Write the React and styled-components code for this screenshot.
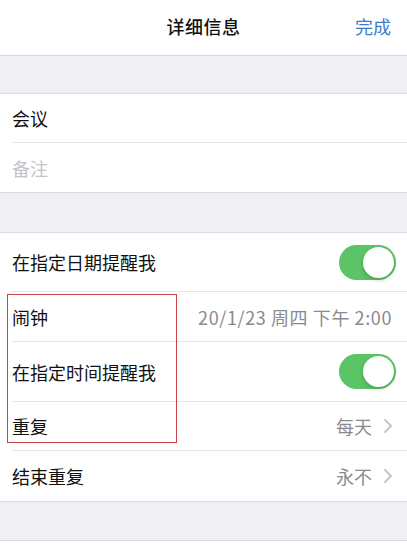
import React from 'react';
import styled, { createGlobalStyle } from 'styled-components';

const GlobalStyle = createGlobalStyle`
  html, body {
    margin: 0;
    padding: 0;
    background: #efeff4;
    font-family: "Noto Sans CJK SC", "Noto Sans", sans-serif;
  }
`;

const Page = styled.div`
  width: 407px;
  height: 554px;
  overflow: hidden;
  background: #efeff4;
  position: relative;
`;

const NavBar = styled.div`
  height: 56px;
  box-sizing: border-box;
  background: #fff;
  border-bottom: 1px solid #d8d8dc;
  display: flex;
  align-items: center;
  justify-content: center;
  position: relative;
`;

const Title = styled.div`
  font-size: 18px;
  font-weight: 500;
  color: #111;
  margin-top: -4px;
  letter-spacing: 0.5px;
`;

const Done = styled.div`
  position: absolute;
  right: 16px;
  top: 13px;
  font-size: 18px;
  color: #3d7cc9;
`;

const Gap = styled.div`
  height: ${p => p.h}px;
`;

const Section = styled.div`
  background: #fff;
  border-top: 1px solid #dcdce0;
  border-bottom: ${p => (p.open ? 'none' : '1px solid #dcdce0')};
  min-height: ${p => p.minH || 0}px;
`;

const Row = styled.div`
  height: ${p => p.h || 49}px;
  display: flex;
  align-items: center;
  margin-left: 12px;
  padding-right: 15px;
  box-sizing: border-box;
  border-bottom: ${p => (p.last ? 'none' : '1px solid #e6e6ea')};
`;

const Label = styled.div`
  flex: 1;
  font-size: 18px;
  color: ${p => (p.placeholder ? '#c4c4c8' : '#111')};
`;

const Value = styled.div`
  font-size: 18px;
  color: #8a8a8e;
  display: flex;
  align-items: center;
  gap: 12px;
`;

const Digits = styled.span`
  letter-spacing: 0.6px;
`;

const Chevron = () => (
  <svg width="8" height="14" viewBox="0 0 8 14">
    <path d="M1 1l6 6-6 6" fill="none" stroke="#c4c4c8" strokeWidth="1.8" strokeLinecap="round" strokeLinejoin="round" />
  </svg>
);

const Track = styled.div`
  width: 57px;
  height: 35px;
  border-radius: 18px;
  background: #5bc466;
  position: relative;
  margin-right: -4px;
`;

const Knob = styled.div`
  position: absolute;
  right: 2px;
  top: 2px;
  width: 31px;
  height: 31px;
  border-radius: 50%;
  background: #fff;
  box-shadow: 0 2px 4px rgba(0, 0, 0, 0.2);
`;

const Toggle = () => (
  <Track>
    <Knob />
  </Track>
);

const Highlight = styled.div`
  position: absolute;
  left: 7px;
  top: 294px;
  width: 170px;
  height: 149px;
  border: 1px solid #c8444a;
  box-sizing: border-box;
  pointer-events: none;
`;

export default function App() {
  return (
    <Page>
      <GlobalStyle />
      <NavBar>
        <Title>详细信息</Title>
        <Done>完成</Done>
      </NavBar>
      <Gap h={37} />
      <Section>
        <Row h={49}>
          <Label>会议</Label>
        </Row>
        <Row h={49} last>
          <Label placeholder>备注</Label>
        </Row>
      </Section>
      <Gap h={39} />
      <Section>
        <Row h={59}>
          <Label>在指定日期提醒我</Label>
          <Toggle />
        </Row>
        <Row h={50}>
          <Label>闹钟</Label>
          <Value>
            <Digits>20/1/23 周四 下午 2:00</Digits>
          </Value>
        </Row>
        <Row h={60}>
          <Label>在指定时间提醒我</Label>
          <Toggle />
        </Row>
        <Row h={49}>
          <Label>重复</Label>
          <Value>
            每天
            <Chevron />
          </Value>
        </Row>
        <Row h={50} last>
          <Label>结束重复</Label>
          <Value>
            永不
            <Chevron />
          </Value>
        </Row>
      </Section>
      <Gap h={38} />
      <Section open minH={20} />
      <Highlight />
    </Page>
  );
}
